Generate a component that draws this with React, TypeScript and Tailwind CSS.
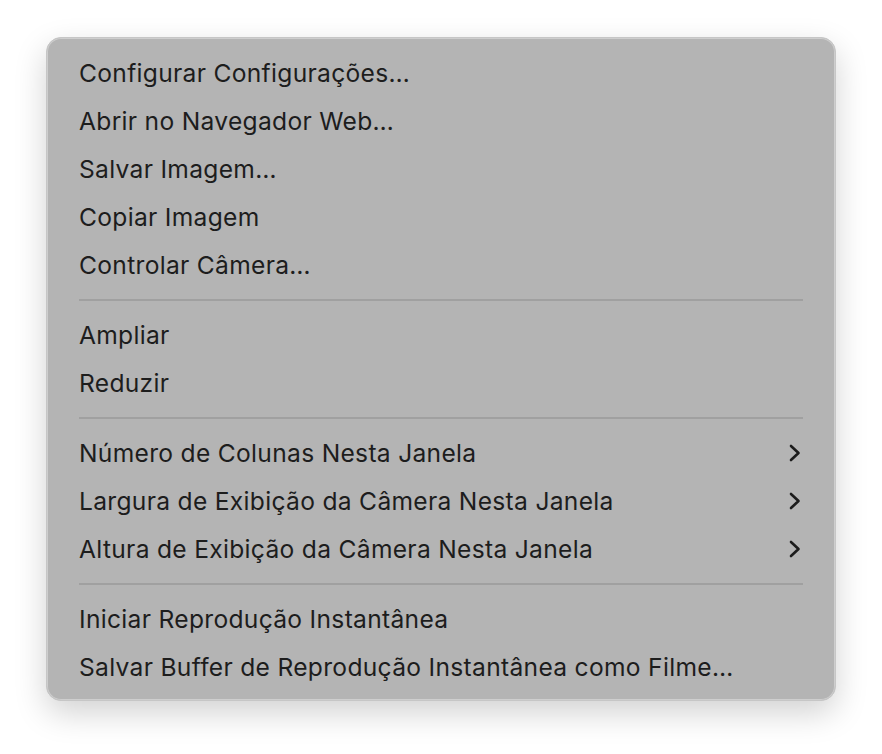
import React from "react";

type Item = { label: string; submenu?: boolean };

const groups: Item[][] = [
  [
    { label: "Configurar Configurações…" },
    { label: "Abrir no Navegador Web…" },
    { label: "Salvar Imagem…" },
    { label: "Copiar Imagem" },
    { label: "Controlar Câmera…" },
  ],
  [{ label: "Ampliar" }, { label: "Reduzir" }],
  [
    { label: "Número de Colunas Nesta Janela", submenu: true },
    { label: "Largura de Exibição da Câmera Nesta Janela", submenu: true },
    { label: "Altura de Exibição da Câmera Nesta Janela", submenu: true },
  ],
  [
    { label: "Iniciar Reprodução Instantânea" },
    { label: "Salvar Buffer de Reprodução Instantânea como Filme…" },
  ],
];

function Chevron() {
  return (
    <svg width="12" height="18" viewBox="0 0 12 18" fill="none">
      <path
        d="M2 2 L9.5 9 L2 16"
        stroke="#1c1c1c"
        strokeWidth="2.6"
        strokeLinecap="round"
        strokeLinejoin="round"
      />
    </svg>
  );
}

export default function App() {
  return (
    <div className="w-[882px] h-[754px] bg-white pt-[37px] pl-[46px]">
      {/* Context menu */}
      <div
        className="w-[790px] rounded-[15px] bg-[#b4b4b4] border border-[#c6c6c6] shadow-[0_12px_32px_rgba(0,0,0,0.18),inset_0_0_0_1px_rgba(255,255,255,0.35)] pt-[11px] pb-[9px] px-[32px] text-[#1d1d1d] text-[24.6px] tracking-[0.3px]"
        style={{ fontFamily: "Inter, 'Liberation Sans', sans-serif" }}
      >
        {groups.map((group, gi) => (
          <div key={gi}>
            {gi > 0 && (
              <div className="h-[22px] flex items-center">
                <div className="w-full h-[2px] bg-[#a0a0a0]" />
              </div>
            )}
            {group.map((item) => (
              <div
                key={item.label}
                className="h-12 flex items-center justify-between"
              >
                <span>{item.label}</span>
                {item.submenu && (
                  <span className="mr-[2px]">
                    <Chevron />
                  </span>
                )}
              </div>
            ))}
          </div>
        ))}
      </div>
    </div>
  );
}
